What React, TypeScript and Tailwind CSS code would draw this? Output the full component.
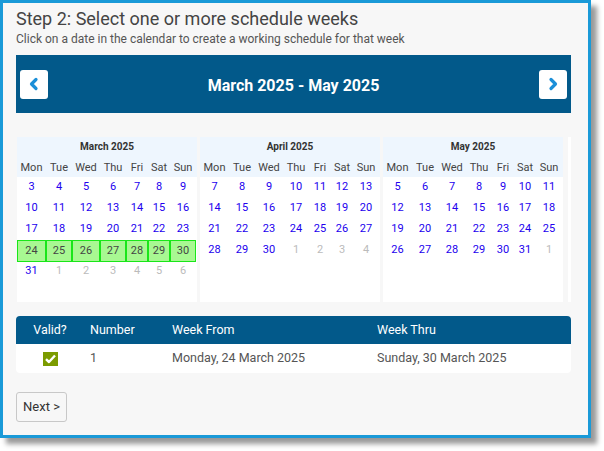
import React from 'react';

type Day = { d: number; out?: boolean };

const DAY_NAMES = ['Mon', 'Tue', 'Wed', 'Thu', 'Fri', 'Sat', 'Sun'];

function buildMonth(startOffset: number, days: number, prevDays: number): Day[][] {
  // startOffset: how many days of the previous month are shown before day 1
  const cells: Day[] = [];
  for (let i = startOffset; i > 0; i--) cells.push({ d: prevDays - i + 1, out: true });
  for (let i = 1; i <= days; i++) cells.push({ d: i });
  let n = 1;
  while (cells.length % 7 !== 0) cells.push({ d: n++, out: true });
  const rows: Day[][] = [];
  for (let i = 0; i < cells.length; i += 7) rows.push(cells.slice(i, i + 7));
  return rows;
}

// first (partial) week of each month isn't shown
const months = [
  { name: 'March 2025', rows: buildMonth(5, 31, 28).slice(1), selected: 3 },
  { name: 'April 2025', rows: buildMonth(1, 30, 31).slice(1), selected: -1 },
  { name: 'May 2025', rows: buildMonth(3, 31, 30).slice(1), selected: -1 },
];

const Chevron = ({ dir }: { dir: 'left' | 'right' }) => (
  <svg width="12" height="14" viewBox="0 0 12 14" fill="none">
    <path
      d={dir === 'left' ? 'M8 2.5 3.5 7 8 11.5' : 'M4 2.5 8.5 7 4 11.5'}
      stroke="#1b8fd8"
      strokeWidth="3.2"
      strokeLinecap="round"
      strokeLinejoin="round"
    />
  </svg>
);

const Month = ({ name, rows, selected }: { name: string; rows: Day[][]; selected: number }) => (
  <div className="flex h-[165px] w-[180px] flex-col bg-white">
    <div className="bg-[#eef6fe] pb-[2px]">
      <div className="pt-[3px] text-center text-[10px] font-bold leading-[14px] text-[#333]">{name}</div>
      <div className="mt-[6px] grid grid-cols-[29px_26px_28px_26px_22px_22px_26px] text-center text-[11px] leading-[15px] text-[#444]">
        {DAY_NAMES.map((n) => (
          <span key={n}>{n}</span>
        ))}
      </div>
    </div>
    <div className="flex flex-col">
      {rows.map((row, ri) => (
        <div
          key={ri}
          className="grid h-[21px] grid-cols-[29px_26px_28px_26px_22px_22px_26px] items-center text-center text-[11px]"
        >
          {row.map((c, ci) =>
            ri === selected ? (
              <span
                key={ci}
                className="flex h-[22px] items-center justify-center border border-[#19e619] bg-[#a8f892] text-[#444]"
              >
                {c.d}
              </span>
            ) : (
              <span key={ci} className={c.out ? 'text-[#bbbbbb]' : 'text-[#2200ee]'}>
                {c.d}
              </span>
            ),
          )}
        </div>
      ))}
    </div>
  </div>
);

const App = () => {
  return (
    <div className="h-[451px] w-[604px] bg-white font-['Roboto',sans-serif]">
      <div className="box-border h-[438px] w-[591px] border-[3px] border-[#1a9ad8] bg-[#f7f7f7] pl-[13px] pr-[17px] shadow-[6px_6px_5px_rgba(0,0,0,0.4)]">
        <h1 className="pt-[5px] text-[18px] leading-[22px] text-[#444]">Step 2: Select one or more schedule weeks</h1>
        <p className="pt-[1px] text-[12px] leading-[16px] text-[#555]">
          Click on a date in the calendar to create a working schedule for that week
        </p>

        <div className="mt-[8px] flex h-[58px] items-center justify-between bg-[#02598a] px-[4px]">
          <button className="flex h-[29px] w-[28px] items-center justify-center rounded-[3px] bg-white">
            <Chevron dir="left" />
          </button>
          <span className="pt-[3px] text-[16px] font-bold text-white">March 2025 - May 2025</span>
          <button className="flex h-[29px] w-[28px] items-center justify-center rounded-[3px] bg-white">
            <Chevron dir="right" />
          </button>
        </div>

        <div className="mt-[24px] flex gap-[3px] pl-[1px]">
          {months.map((m) => (
            <Month key={m.name} {...m} />
          ))}
          <div className="ml-[2px] h-[165px] w-[3px] bg-white" />
        </div>

        <div className="mt-[14px] overflow-hidden rounded-[4px] text-[12.5px]">
          <div className="grid h-[28px] grid-cols-[68px_82px_205px_1fr] items-center bg-[#02598a] text-white">
            <span className="text-center">Valid?</span>
            <span className="pl-[6px]">Number</span>
            <span className="pl-[6px]">Week From</span>
            <span className="pl-[6px]">Week Thru</span>
          </div>
          <div className="grid h-[29px] grid-cols-[68px_82px_205px_1fr] items-center bg-white text-[#555]">
            <span className="flex justify-center">
              <svg width="15" height="14" viewBox="0 0 15 14">
                <rect width="15" height="14" fill="#7b9b00" />
                <path d="M3 7.2 6 10l6-6.5" stroke="#fff" strokeWidth="2.4" fill="none" strokeLinejoin="round" />
              </svg>
            </span>
            <span className="pl-[6px]">1</span>
            <span className="pl-[6px]">Monday, 24 March 2025</span>
            <span className="pl-[6px]">Sunday, 30 March 2025</span>
          </div>
        </div>

        <button className="mt-[19px] h-[30px] w-[51px] rounded-[3px] border border-[#c8c8c8] bg-[#f7f7f7] text-[13px] text-[#333]">
          Next &gt;
        </button>
      </div>
    </div>
  );
};

export default App;
